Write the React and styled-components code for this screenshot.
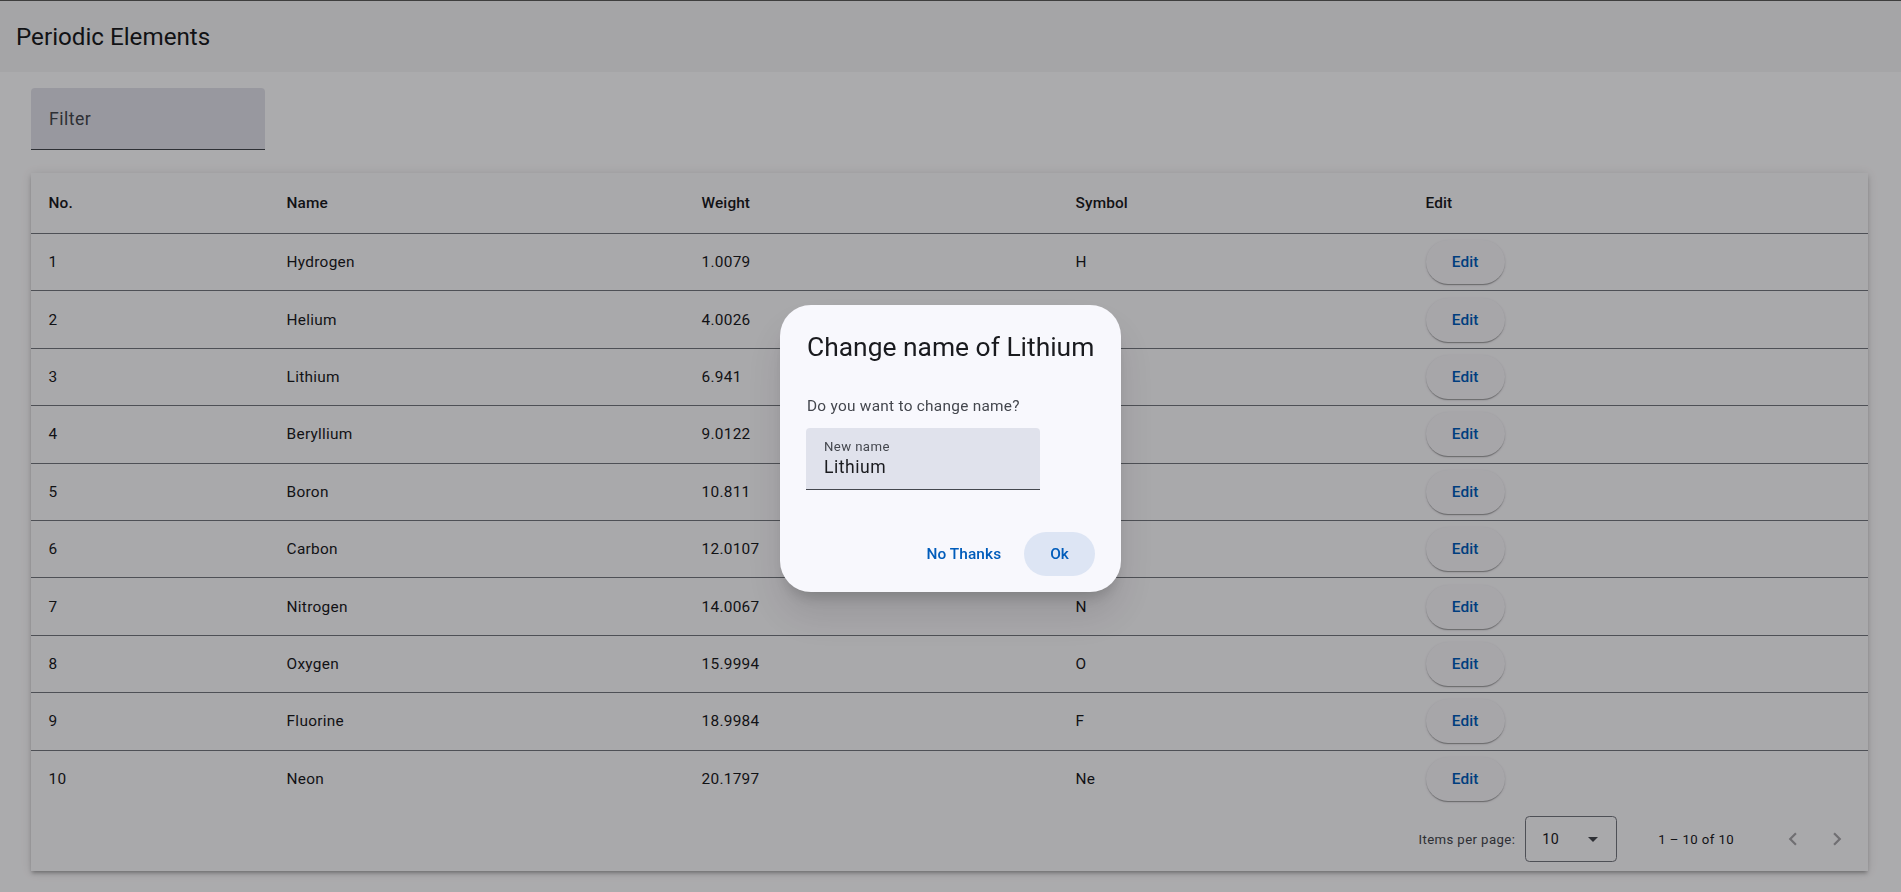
import React from "react";
import styled, { createGlobalStyle } from "styled-components";

const GlobalStyle = createGlobalStyle`
  html, body {
    margin: 0;
    padding: 0;
    background: #fdfcff;
    font-family: Roboto, "Noto Sans", sans-serif;
    color: #1a1b1f;
    overflow: hidden;
  }
  * { box-sizing: border-box; }
`;

const elements = [
  { no: 1, name: "Hydrogen", weight: "1.0079", symbol: "H" },
  { no: 2, name: "Helium", weight: "4.0026", symbol: "He" },
  { no: 3, name: "Lithium", weight: "6.941", symbol: "Li" },
  { no: 4, name: "Beryllium", weight: "9.0122", symbol: "Be" },
  { no: 5, name: "Boron", weight: "10.811", symbol: "B" },
  { no: 6, name: "Carbon", weight: "12.0107", symbol: "C" },
  { no: 7, name: "Nitrogen", weight: "14.0067", symbol: "N" },
  { no: 8, name: "Oxygen", weight: "15.9994", symbol: "O" },
  { no: 9, name: "Fluorine", weight: "18.9984", symbol: "F" },
  { no: 10, name: "Neon", weight: "20.1797", symbol: "Ne" },
];

const Page = styled.div`
  min-height: 100vh;
`;

const Toolbar = styled.header`
  height: 72px;
  border-top: 1px solid #5c5c5c;
  background: #f4f3f6;
  display: flex;
  align-items: center;
  padding: 0 16px;
`;

const Title = styled.h1`
  margin: 0;
  font-size: 24.2px;
  font-weight: 400;
  color: #1a1b1f;
`;

const Content = styled.main`
  padding: 16px 33px 0 31px;
`;

const FilterField = styled.div`
  width: 234px;
  height: 62px;
  margin-bottom: 23px;
  background: #e1e1ea;
  border-radius: 4px 4px 0 0;
  border-bottom: 1px solid #44474e;
  display: flex;
  align-items: center;
  padding: 1px 18px 0;
  font-size: 17.6px;
  letter-spacing: 0.5px;
  color: #44474e;
`;

const Card = styled.section`
  background: #faf9fd;
  box-shadow: 0 3px 3px -2px rgba(0, 0, 0, 0.2), 0 3px 4px rgba(0, 0, 0, 0.14),
    0 1px 10px rgba(0, 0, 0, 0.12);
`;

const Row = styled.div`
  display: grid;
  grid-template-columns: 238px 415px 374px 350px 1fr;
  align-items: center;
  height: ${(p) => (p.$head ? "61px" : "57.4px")};
  border-bottom: ${(p) => (p.$last ? "none" : "1px solid #74777f")};
  font-size: 15.4px;
  font-weight: ${(p) => (p.$head ? 500 : 400)};
  letter-spacing: ${(p) => (p.$head ? "0.1px" : "0.27px")};
  color: #1a1b1f;
`;

const Cell = styled.div`
  padding: 0 17.6px;
`;

const EditButton = styled.button`
  width: 79px;
  height: 44px;
  border: none;
  border-radius: 22px;
  background: #f6f5fa;
  color: #005cbb;
  font-family: inherit;
  font-size: 15.4px;
  font-weight: 500;
  letter-spacing: 0.1px;
  box-shadow: 0 2px 1px -1px rgba(0, 0, 0, 0.2), 0 1px 1px rgba(0, 0, 0, 0.14),
    0 1px 3px rgba(0, 0, 0, 0.12);
  cursor: pointer;
`;

const Paginator = styled.div`
  height: 63px;
  display: flex;
  align-items: center;
  justify-content: flex-end;
  padding-right: 9px;
  font-size: 13.2px;
  letter-spacing: 0.4px;
  color: #44474e;
`;

const PageSizeLabel = styled.span`
  margin-right: 10px;
`;

const SizeSelect = styled.div`
  width: 92px;
  height: 46px;
  border: 1px solid #74777f;
  border-radius: 4.4px;
  display: flex;
  align-items: center;
  justify-content: space-between;
  padding: 0 18px 0 16px;
  font-size: 14.3px;
  letter-spacing: 0.3px;
  color: #1a1b1f;
`;

const Caret = styled.span`
  width: 0;
  height: 0;
  border-left: 5.5px solid transparent;
  border-right: 5.5px solid transparent;
  border-top: 5.5px solid #44474e;
`;

const RangeLabel = styled.span`
  margin: 0 37px 0 41px;
  color: #1a1b1f;
  font-size: 13.2px;
`;

const NavButton = styled.button`
  width: 44px;
  height: 44px;
  border: none;
  background: transparent;
  padding: 0;
  display: flex;
  align-items: center;
  justify-content: center;
  color: rgba(26, 27, 31, 0.38);
`;

const Backdrop = styled.div`
  position: fixed;
  inset: 0;
  background: rgba(0, 0, 0, 0.32);
  display: flex;
  align-items: center;
  justify-content: center;
`;

const Dialog = styled.div`
  width: 341px;
  margin-top: 5px;
  background: #f8f8fd;
  border-radius: 31px;
  padding: 25px 26px 16px 27px;
  box-shadow: 0 11px 15px -7px rgba(0, 0, 0, 0.2), 0 24px 38px 3px rgba(0, 0, 0, 0.1);
`;

const DialogTitle = styled.h2`
  margin: 0;
  font-size: 26.4px;
  line-height: 35.2px;
  font-weight: 400;
  color: #1a1b1f;
  white-space: nowrap;
`;

const DialogText = styled.p`
  margin: 29px 0 11px;
  font-size: 15.4px;
  line-height: 22px;
  letter-spacing: 0.27px;
  color: #44474e;
`;

const NameField = styled.div`
  width: 234px;
  height: 62px;
  margin-left: -1px;
  background: #e0e2ec;
  border-radius: 4px 4px 0 0;
  border-bottom: 1px solid #44474e;
  padding: 10px 18px 0;
  display: flex;
  flex-direction: column;
`;

const FieldLabel = styled.span`
  font-size: 13.2px;
  line-height: 17px;
  letter-spacing: 0.4px;
  color: #44474e;
`;

const FieldValue = styled.span`
  font-size: 17.6px;
  line-height: 24px;
  letter-spacing: 0.5px;
  color: #1a1b1f;
`;

const Actions = styled.div`
  display: flex;
  justify-content: flex-end;
  align-items: center;
  gap: 10px;
  margin-top: 42px;
`;

const TextButton = styled.button`
  height: 44px;
  border: none;
  border-radius: 22px;
  padding: 0 ${(p) => (p.$tonal ? "26px" : "13px")};
  background: ${(p) => (p.$tonal ? "#dde5f4" : "transparent")};
  color: #005cbb;
  font-family: inherit;
  font-size: 15.4px;
  font-weight: 500;
  letter-spacing: 0.1px;
  cursor: pointer;
`;

const Chevron = ({ dir }) => (
  <svg width="26" height="26" viewBox="0 0 24 24" fill="currentColor">
    {dir === "left" ? (
      <path d="M15.41 7.41 14 6l-6 6 6 6 1.41-1.41L10.83 12z" />
    ) : (
      <path d="M8.59 16.59 10 18l6-6-6-6-1.41 1.41L13.17 12z" />
    )}
  </svg>
);

export default function App() {
  return (
    <Page>
      <GlobalStyle />
      <Toolbar>
        <Title>Periodic Elements</Title>
      </Toolbar>
      <Content>
        <FilterField>Filter</FilterField>
        <Card>
          <Row $head>
            <Cell>No.</Cell>
            <Cell>Name</Cell>
            <Cell>Weight</Cell>
            <Cell>Symbol</Cell>
            <Cell>Edit</Cell>
          </Row>
          {elements.map((el, i) => (
            <Row key={el.no} $last={i === elements.length - 1}>
              <Cell>{el.no}</Cell>
              <Cell>{el.name}</Cell>
              <Cell>{el.weight}</Cell>
              <Cell>{el.symbol}</Cell>
              <Cell>
                <EditButton>Edit</EditButton>
              </Cell>
            </Row>
          ))}
          <Paginator>
            <PageSizeLabel>Items per page:</PageSizeLabel>
            <SizeSelect>
              <span>10</span>
              <Caret />
            </SizeSelect>
            <RangeLabel>1 – 10 of 10</RangeLabel>
            <NavButton>
              <Chevron dir="left" />
            </NavButton>
            <NavButton>
              <Chevron dir="right" />
            </NavButton>
          </Paginator>
        </Card>
      </Content>
      <Backdrop>
        <Dialog>
          <DialogTitle>Change name of Lithium</DialogTitle>
          <DialogText>Do you want to change name?</DialogText>
          <NameField>
            <FieldLabel>New name</FieldLabel>
            <FieldValue>Lithium</FieldValue>
          </NameField>
          <Actions>
            <TextButton>No Thanks</TextButton>
            <TextButton $tonal>Ok</TextButton>
          </Actions>
        </Dialog>
      </Backdrop>
    </Page>
  );
}
